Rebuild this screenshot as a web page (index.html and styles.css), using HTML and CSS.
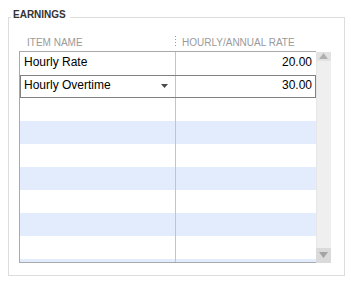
FILE: index.html
```html
<!DOCTYPE html>
<html>
<head>
<meta charset="utf-8">
<title>Earnings</title>
<link rel="stylesheet" href="styles.css">
</head>
<body>
<fieldset class="earnings">
  <legend class="earnings-title">EARNINGS</legend>
  <div class="grid">
    <div class="grid-header">
      <div class="hcell hcell-name">ITEM NAME</div>
      <div class="hsep"></div>
      <div class="hcell hcell-rate">HOURLY/ANNUAL RATE</div>
    </div>
    <div class="grid-body">
      <div class="rows">
        <div class="row">
          <div class="cell cell-name">Hourly Rate</div>
          <div class="cell cell-rate">20.00</div>
        </div>
        <div class="row row-editor">
          <div class="ed ed-name">
            <span>Hourly Overtime</span>
            <svg class="combo-arrow" width="7" height="4" viewBox="0 0 7 4"><polygon points="0,0 7,0 3.5,4" fill="#4a4a4a"/></svg>
          </div>
          <div class="ed ed-rate">30.00</div>
        </div>
        <div class="row"><div class="cell cell-name"></div><div class="cell cell-rate"></div></div>
        <div class="row row-alt"><div class="cell cell-name"></div><div class="cell cell-rate"></div></div>
        <div class="row"><div class="cell cell-name"></div><div class="cell cell-rate"></div></div>
        <div class="row row-alt"><div class="cell cell-name"></div><div class="cell cell-rate"></div></div>
        <div class="row"><div class="cell cell-name"></div><div class="cell cell-rate"></div></div>
        <div class="row row-alt"><div class="cell cell-name"></div><div class="cell cell-rate"></div></div>
        <div class="row"><div class="cell cell-name"></div><div class="cell cell-rate"></div></div>
        <div class="row row-alt"><div class="cell cell-name"></div><div class="cell cell-rate"></div></div>
      </div>
      <div class="scrollbar">
        <div class="sb-up"><svg width="9" height="6" viewBox="0 0 9 6"><polygon points="4.5,0 9,6 0,6" fill="#b0b0b0"/></svg></div>
        <div class="sb-track"></div>
        <div class="sb-down"><svg width="9" height="6" viewBox="0 0 9 6"><polygon points="0,0 9,0 4.5,6" fill="#a4a4a4"/></svg></div>
      </div>
    </div>
  </div>
</fieldset>
</body>
</html>
```
FILE: styles.css
```css
* {
  box-sizing: border-box;
}

body {
  margin: 0;
  background: #ffffff;
  font-family: "Liberation Sans", Arial, sans-serif;
}

.earnings {
  margin: 9px 6px 0 8px;
  padding: 0 2px 12px;
  border: 1px solid #dcdcdc;
  min-width: 0;
}

.earnings-title {
  padding: 0 4px 5px 2px;
  font-size: 10px;
  line-height: 12px;
  font-weight: bold;
  color: #333333;
}

.grid {
  margin-left: 8px;
  width: 312px;
}

.grid-header {
  display: flex;
  height: 25px;
}

.hcell {
  padding-top: 11px;
  font-size: 10px;
  line-height: 12px;
  color: #9a9a9a;
  white-space: nowrap;
}

.hcell-name {
  width: 156px;
  padding-left: 8px;
}

.hsep {
  width: 1px;
  height: 10px;
  margin-top: 10px;
  background: repeating-linear-gradient(to bottom, #9a9a9a 0 1px, transparent 1px 3px);
}

.hcell-rate {
  padding-left: 6px;
}

.grid-body {
  display: flex;
}

.rows {
  width: 297px;
  height: 212px;
  border: 1px solid #a9a9a9;
  border-right: 0;
  overflow: hidden;
}

.row {
  display: flex;
  height: 23px;
  font-size: 12px;
  line-height: 20px;
  color: #000000;
  white-space: nowrap;
}

.row-alt {
  background: #e2ecfc;
}

.cell {
  padding-bottom: 3px;
}

.cell-name {
  width: 156px;
  padding-left: 4px;
  border-right: 1px solid #c4c4c4;
}

.cell-rate {
  flex: 1;
  padding-right: 4px;
  text-align: right;
}

.row-editor {
  border: 1px solid #808080;
  background: #ffffff;
  line-height: 18px;
}

.ed {
  padding-bottom: 3px;
}

.ed-name {
  width: 155px;
  display: flex;
  justify-content: space-between;
  align-items: flex-start;
  padding-left: 3px;
  padding-right: 7px;
  border-right: 1px solid #c4c4c4;
}

.combo-arrow {
  margin-top: 8px;
}

.ed-rate {
  flex: 1;
  padding-right: 3px;
  text-align: right;
}

.scrollbar {
  width: 15px;
  height: 211px;
  margin-top: 1px;
  display: flex;
  flex-direction: column;
  background: #efefef;
}

.sb-up {
  height: 9px;
  padding-top: 1px;
  display: flex;
  justify-content: center;
  align-items: flex-start;
  background: #e2e2e2;
}

.sb-track {
  flex: 1;
  border-left: 1px solid #e6e6e6;
}

.sb-down {
  height: 15px;
  padding-top: 4px;
  display: flex;
  justify-content: center;
  align-items: flex-start;
  background: #dadada;
}
```
